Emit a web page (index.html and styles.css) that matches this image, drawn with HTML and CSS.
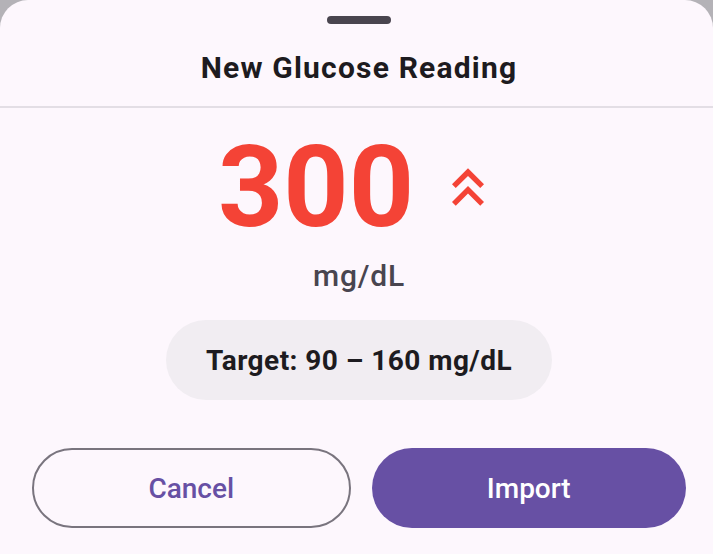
FILE: index.html
```html
<!DOCTYPE html>
<html lang="en">
<head>
<meta charset="utf-8">
<title>New Glucose Reading</title>
<link rel="stylesheet" href="styles.css">
</head>
<body>
<div class="sheet">
  <div class="handle"></div>
  <h1 class="title">New Glucose Reading</h1>
  <div class="divider"></div>
  <div class="reading">
    <span class="value">300</span>
    <svg class="trend" viewBox="0 0 24 24" width="64" height="64" aria-hidden="true">
      <path fill="#f44336" d="M6 17.59L7.41 19 12 14.42 16.59 19 18 17.59l-6-6z M6 11L7.41 12.41 12 7.83 16.59 12.41 18 11l-6-6z"/>
    </svg>
  </div>
  <div class="unit">mg/dL</div>
  <div class="target">Target: 90 – 160 mg/dL</div>
  <div class="actions">
    <button class="btn btn-outline">Cancel</button>
    <button class="btn btn-filled">Import</button>
  </div>
</div>
</body>
</html>
```
FILE: styles.css
```css
* { box-sizing: border-box; }
html, body {
  margin: 0;
  padding: 0;
  height: 100%;
}
body {
  background: #b4b2b7;
  font-family: Roboto, "Noto Sans", sans-serif;
  overflow: hidden;
}
.sheet {
  background: #fdf7fd;
  border-radius: 28px 28px 0 0;
  height: 554px;
  display: flex;
  flex-direction: column;
  align-items: center;
  padding: 16px 27px 0 32px;
}
.handle {
  width: 64px;
  height: 8px;
  border-radius: 4px;
  background: #49454f;
  flex: none;
}
.title {
  margin: 26px 0 0;
  font-size: 30px;
  line-height: 36px;
  font-weight: 700;
  letter-spacing: 1.2px;
  color: #1d1b20;
}
.divider {
  align-self: stretch;
  margin: 20px -27px 0 -32px;
  height: 2px;
  background: #e3dee5;
}
.reading {
  margin-top: 22px;
  display: flex;
  align-items: center;
  gap: 22px;
}
.value {
  font-size: 114px;
  line-height: 114px;
  font-weight: 700;
  color: #f44336;
}
.trend { display: block; }
.unit {
  margin-top: 13px;
  font-size: 30px;
  line-height: 38px;
  font-weight: 500;
  letter-spacing: 0.8px;
  color: #49454f;
}
.target {
  margin-top: 25px;
  height: 80px;
  padding: 0 40px;
  border-radius: 40px;
  background: #f1edf2;
  display: flex;
  align-items: center;
  font-size: 28px;
  font-weight: 700;
  letter-spacing: 0.45px;
  color: #1d1b20;
}
.actions {
  margin-top: 48px;
  align-self: stretch;
  display: flex;
  gap: 21px;
}
.btn {
  flex: 1;
  height: 80px;
  border-radius: 40px;
  font-family: Roboto, "Noto Sans", sans-serif;
  font-size: 28px;
  font-weight: 500;
  cursor: pointer;
}
.btn-outline {
  background: transparent;
  border: 2px solid #79747e;
  color: #6750a4;
}
.btn-filled {
  background: #6750a4;
  border: none;
  color: #ffffff;
}
```
